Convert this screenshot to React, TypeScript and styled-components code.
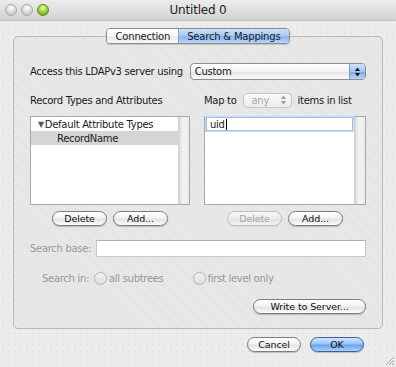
import React from 'react';
import styled, { createGlobalStyle } from 'styled-components';

const GlobalStyle = createGlobalStyle`
html, body {
  margin: 0;
  padding: 0;
  background: #ececec;
}
* { box-sizing: border-box; }
`

const Window = styled.div`
width: 396px;
height: 367px;
display: flex;
flex-direction: column;
position: relative;
overflow: hidden;
font-family: "DejaVu Sans", "Liberation Sans", sans-serif;
font-size: 10px;
letter-spacing: -0.3px;
color: #1a1a1a;
background-color: #ececec;
background-image: radial-gradient(#dcdcdc 0.6px, transparent 0.8px);
background-size: 6px 6px;
`

const TitleBar = styled.div`
height: 21px;
flex: none;
display: grid;
grid-template-columns: 1fr auto 1fr;
align-items: center;
background: linear-gradient(#ececec, #d3d3d3);
border-bottom: 1px solid #c4c4c4;
`

const Lights = styled.div`
display: flex;
gap: 4px;
padding-left: 5px;
`

const Light = styled.span<{ $green?: boolean }>`
width: 12px;
height: 12px;
border-radius: 50%;
border: 1px solid ${p => (p.$green ? '#5c8a1c' : '#a8a8a8')};
background: ${p => (p.$green
    ? 'radial-gradient(circle at 50% 30%, #eaffb0 0, #9fd43a 45%, #5d9e10 100%)'
    : 'radial-gradient(circle at 50% 30%, #ffffff 0, #dcdcdc 50%, #bdbdbd 100%)')};
`

const Title = styled.div`
font-size: 12px;
letter-spacing: -0.2px;
color: #222;
`

const Body = styled.div`
flex: 1;
display: flex;
flex-direction: column;
padding: 7px 13px 0 13px;
`

const Tabs = styled.div`
align-self: center;
display: flex;
height: 16px;
position: relative;
z-index: 1;
border: 1px solid #8b8b8b;
border-radius: 4px;
overflow: hidden;
box-shadow: 0 1px 1px rgba(0,0,0,0.15);
`

const Tab = styled.div<{ $active?: boolean }>`
display: flex;
align-items: center;
justify-content: center;
letter-spacing: -0.2px;
padding: ${p => (p.$active ? '0 9px 0 8px' : '0 8px 0 9px')};
background: ${p => (p.$active
    ? 'linear-gradient(#cfe2fb 0%, #a4c8f5 50%, #86b5f0 55%, #b9d8fc 100%)'
    : 'linear-gradient(#ffffff 0%, #f6f6f6 50%, #e9e9e9 55%, #f8f8f8 100%)')};
& + & { border-left: 1px solid #8da4c4; }
`

const TabBox = styled.div`
margin-top: -8px;
height: 293px;
display: flex;
flex-direction: column;
padding: 26px 16px 0 16px;
border: 1px solid #b9b9b9;
border-radius: 5px;
background-color: #e3e3e3;
background-image: repeating-linear-gradient(45deg, rgba(255,255,255,0.25) 0 1px, transparent 1px 2px);
`

const Row = styled.div`
display: flex;
align-items: center;
`

const PopupButton = styled.div`
flex: 1;
height: 17px;
margin-left: 7px;
display: flex;
align-items: center;
border: 1px solid #8e8e8e;
border-radius: 4px;
overflow: hidden;
background: linear-gradient(#ffffff, #f3f3f3 50%, #e6e6e6 55%, #fafafa);
`

const PopupLabel = styled.span`
flex: 1;
padding-left: 4px;
`

const PopupArrows = styled.span`
width: 16px;
height: 100%;
display: flex;
align-items: center;
justify-content: center;
border-left: 1px solid #7d9ccc;
background: linear-gradient(#cfe2fb 0%, #a4c8f5 50%, #78a9ec 55%, #b9d8fc 100%);
`

const Columns = styled.div`
display: grid;
grid-template-columns: 160px 162px;
column-gap: 14px;
`

const ColHeader = styled.div`
height: 16px;
margin-top: 12px;
display: flex;
align-items: center;
gap: 6px;
`

const Stepper = styled.div`
width: 49px;
height: 15px;
display: flex;
align-items: center;
justify-content: space-between;
padding: 0 4px 0 8px;
border: 1px solid #c6c6c6;
border-radius: 4px;
background: linear-gradient(#fafafa, #ececec);
color: #a8a8a8;
`

const List = styled.div`
height: 89px;
margin-top: 8px;
display: flex;
background: #fff;
border: 1px solid #a9a9a9;
`

const ListBody = styled.div`
flex: 1;
display: flex;
flex-direction: column;
`

const Scroller = styled.div`
width: 11px;
flex: none;
background: linear-gradient(to right, #d9d9d9, #f4f4f4 40%, #ececec);
border-left: 1px solid #d0d0d0;
`

const ListRow = styled.div<{ $selected?: boolean; $indent: number }>`
height: 14px;
display: flex;
align-items: center;
padding-left: ${p => p.$indent}px;
background: ${p => (p.$selected ? '#d5d5d5' : 'transparent')};
`

const Disclosure = styled.span`
font-size: 8px;
color: #555;
margin-right: 1px;
`

const EditField = styled.div`
height: 14px;
margin: 0 1px;
display: flex;
align-items: center;
padding-left: 3px;
border: 1px solid #9fbde6;
box-shadow: 0 0 0 1px #c9dcf6;
`

const Caret = styled.span`
width: 1px;
height: 11px;
background: #000;
margin-left: 1px;
`

const ButtonRow = styled.div`
margin-top: 6px;
display: flex;
justify-content: center;
gap: 6px;
`

const PushButton = styled.div<{ $width: number; $disabled?: boolean; $default?: boolean }>`
width: ${p => p.$width}px;
height: 15px;
display: flex;
align-items: center;
justify-content: center;
border-radius: 8px;
font-size: 9.5px;
letter-spacing: -0.1px;
color: ${p => (p.$disabled ? '#a5a5a5' : '#111')};
border: 1px solid ${p => (p.$disabled ? '#bdbdbd' : p.$default ? '#3d5f9c' : '#7c7c7c')};
background: ${p => (p.$default
    ? 'linear-gradient(#d3e6fd 0%, #9cc5f5 45%, #6aa4ec 55%, #a8d4fb 100%)'
    : p.$disabled
      ? 'linear-gradient(#f7f7f7, #ececec 50%, #e2e2e2 55%, #f2f2f2)'
      : 'linear-gradient(#ffffff 0%, #f4f4f4 45%, #e3e3e3 55%, #fbfbfb 100%)')};
box-shadow: 0 1px 1px rgba(0,0,0,${p => (p.$disabled ? 0.05 : 0.2)});
`

const SearchBaseRow = styled.div`
margin-top: 14px;
display: flex;
align-items: center;
gap: 5px;
`

const DimLabel = styled.span`
color: #989898;
`

const TextField = styled.div`
flex: 1;
height: 17px;
background: #fff;
border: 1px solid #c9c9c9;
border-top-color: #b0b0b0;
`

const RadioRow = styled.div`
margin-top: 14px;
height: 15px;
display: flex;
align-items: center;
color: #989898;
padding-left: 12px;
`

const Radio = styled.span<{ $gap: number }>`
display: flex;
align-items: center;
margin-left: ${p => p.$gap}px;
&::before {
  content: '';
  width: 11px;
  height: 11px;
  margin-right: 2px;
  border-radius: 50%;
  border: 1px solid #b4b4b4;
  background: linear-gradient(#f4f4f4, #dcdcdc);
}
`

const WriteRow = styled.div`
margin-top: 13px;
display: flex;
justify-content: flex-end;
`

const Footer = styled.div`
display: flex;
justify-content: flex-end;
gap: 9px;
padding: 8px 19px 0 0;
`

const Grip = styled.svg`
position: absolute;
right: 1px;
bottom: 1px;
`

function UpDown({ color }: { color: string }) {
  return (
    <svg width="7" height="10" viewBox="0 0 7 10">
      <path d="M3.5 0.5 L6 4 L1 4 Z" fill={color} />
      <path d="M3.5 9.5 L6 6 L1 6 Z" fill={color} />
    </svg>
  );
}

export default function App() {
  return (
    <Window>
      <GlobalStyle />
      <TitleBar>
        <Lights>
          <Light />
          <Light />
          <Light $green />
        </Lights>
        <Title>Untitled 0</Title>
        <span />
      </TitleBar>

      <Body>
        <Tabs>
          <Tab>Connection</Tab>
          <Tab $active>Search &amp; Mappings</Tab>
        </Tabs>

        <TabBox>
          <Row>
            <span>Access this LDAPv3 server using</span>
            <PopupButton>
              <PopupLabel>Custom</PopupLabel>
              <PopupArrows><UpDown color="#111" /></PopupArrows>
            </PopupButton>
          </Row>

          <Columns>
            <ColHeader>Record Types and Attributes</ColHeader>
            <ColHeader>
              <span>Map to</span>
              <Stepper>
                <span>any</span>
                <UpDown color="#9a9a9a" />
              </Stepper>
              <span>items in list</span>
            </ColHeader>

            <List>
              <ListBody>
                <ListRow $indent={7}><Disclosure>▼</Disclosure>Default Attribute Types</ListRow>
                <ListRow $indent={26} $selected>RecordName</ListRow>
              </ListBody>
              <Scroller />
            </List>
            <List>
              <ListBody>
                <EditField>uid<Caret /></EditField>
              </ListBody>
              <Scroller />
            </List>

            <ButtonRow>
              <PushButton $width={55}>Delete</PushButton>
              <PushButton $width={55}>Add...</PushButton>
            </ButtonRow>
            <ButtonRow>
              <PushButton $width={55} $disabled>Delete</PushButton>
              <PushButton $width={55}>Add...</PushButton>
            </ButtonRow>
          </Columns>

          <SearchBaseRow>
            <DimLabel>Search base:</DimLabel>
            <TextField />
          </SearchBaseRow>

          <RadioRow>
            <span>Search in:</span>
            <Radio $gap={5}>all subtrees</Radio>
            <Radio $gap={29}>first level only</Radio>
          </RadioRow>

          <WriteRow>
            <PushButton $width={113}>Write to Server...</PushButton>
          </WriteRow>
        </TabBox>

        <Footer>
          <PushButton $width={54}>Cancel</PushButton>
          <PushButton $width={54} $default>OK</PushButton>
        </Footer>
      </Body>

      <Grip width="11" height="11" viewBox="0 0 11 11">
        <path d="M10 2 L2 10 M10 5 L5 10 M10 8 L8 10" stroke="#a8a8a8" strokeWidth="1" />
      </Grip>
    </Window>
  );
}
